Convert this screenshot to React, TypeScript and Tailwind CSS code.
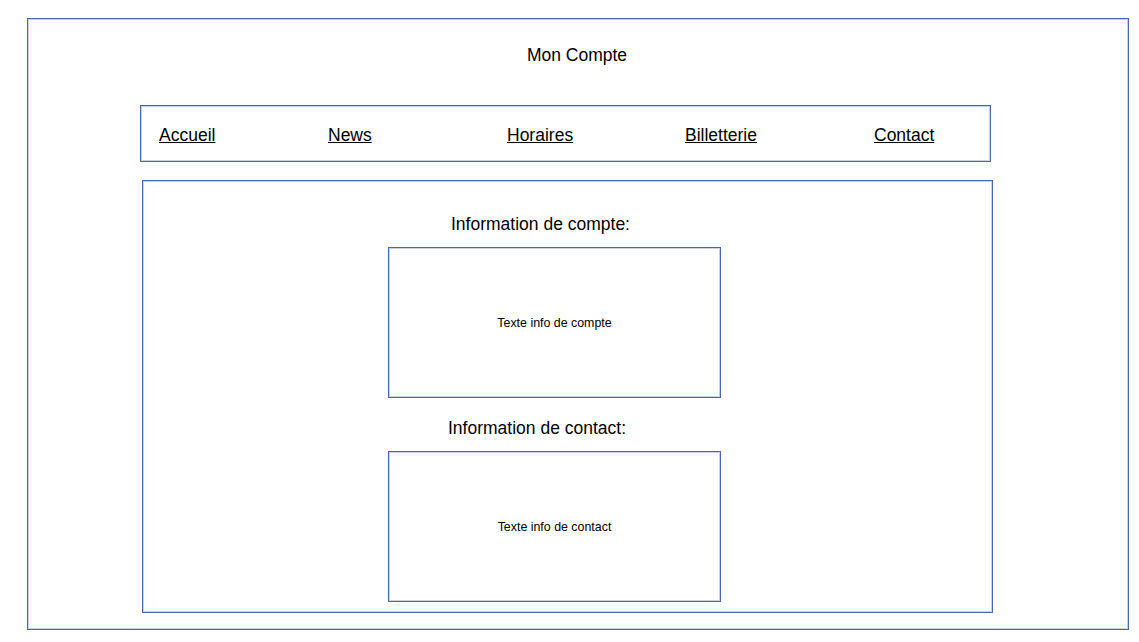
export default function App() {
  const font = { fontFamily: '"Liberation Sans", Arial, sans-serif' };
  const box = "border border-[#4a68a8] shadow-[inset_0_0_0_1px_#c6d1e7]";
  return (
    <div className="w-[1139px] h-[642px] bg-white text-black" style={font}>
      <div className="pt-[18px] pl-[27px]">
        <div className={`w-[1102px] h-[612px] ${box}`}>
          <div className="pt-[27px] text-[17.5px] leading-[18px] text-center pr-[2px]">Mon Compte</div>
          <div className={`ml-[112px] mt-[41px] w-[851px] h-[57px] ${box} flex items-center`}>
            <div className="grid grid-cols-[169px_179px_178px_189px_auto] pl-[18px] pt-[2px] text-[17.5px] leading-[18px] w-full">
              <a className="underline">Accueil</a>
              <a className="underline">News</a>
              <a className="underline">Horaires</a>
              <a className="underline">Billetterie</a>
              <a className="underline">Contact</a>
            </div>
          </div>
          <div className={`ml-[114px] mt-[18px] w-[851px] h-[433px] ${box}`}>
            <div className="ml-[308px] mt-[34px] text-[17.5px] leading-[18px]">Information de compte:</div>
            <div className={`ml-[245px] mt-[14px] w-[333px] h-[151px] ${box} flex items-center justify-center pt-[2px] text-[12.4px]`}>
              Texte info de compte
            </div>
            <div className="ml-[305px] mt-[21px] text-[17.5px] leading-[18px]">Information de contact:</div>
            <div className={`ml-[245px] mt-[14px] w-[333px] h-[151px] ${box} flex items-center justify-center pt-[2px] text-[12.4px]`}>
              Texte info de contact
            </div>
          </div>
        </div>
      </div>
    </div>
  );
}
